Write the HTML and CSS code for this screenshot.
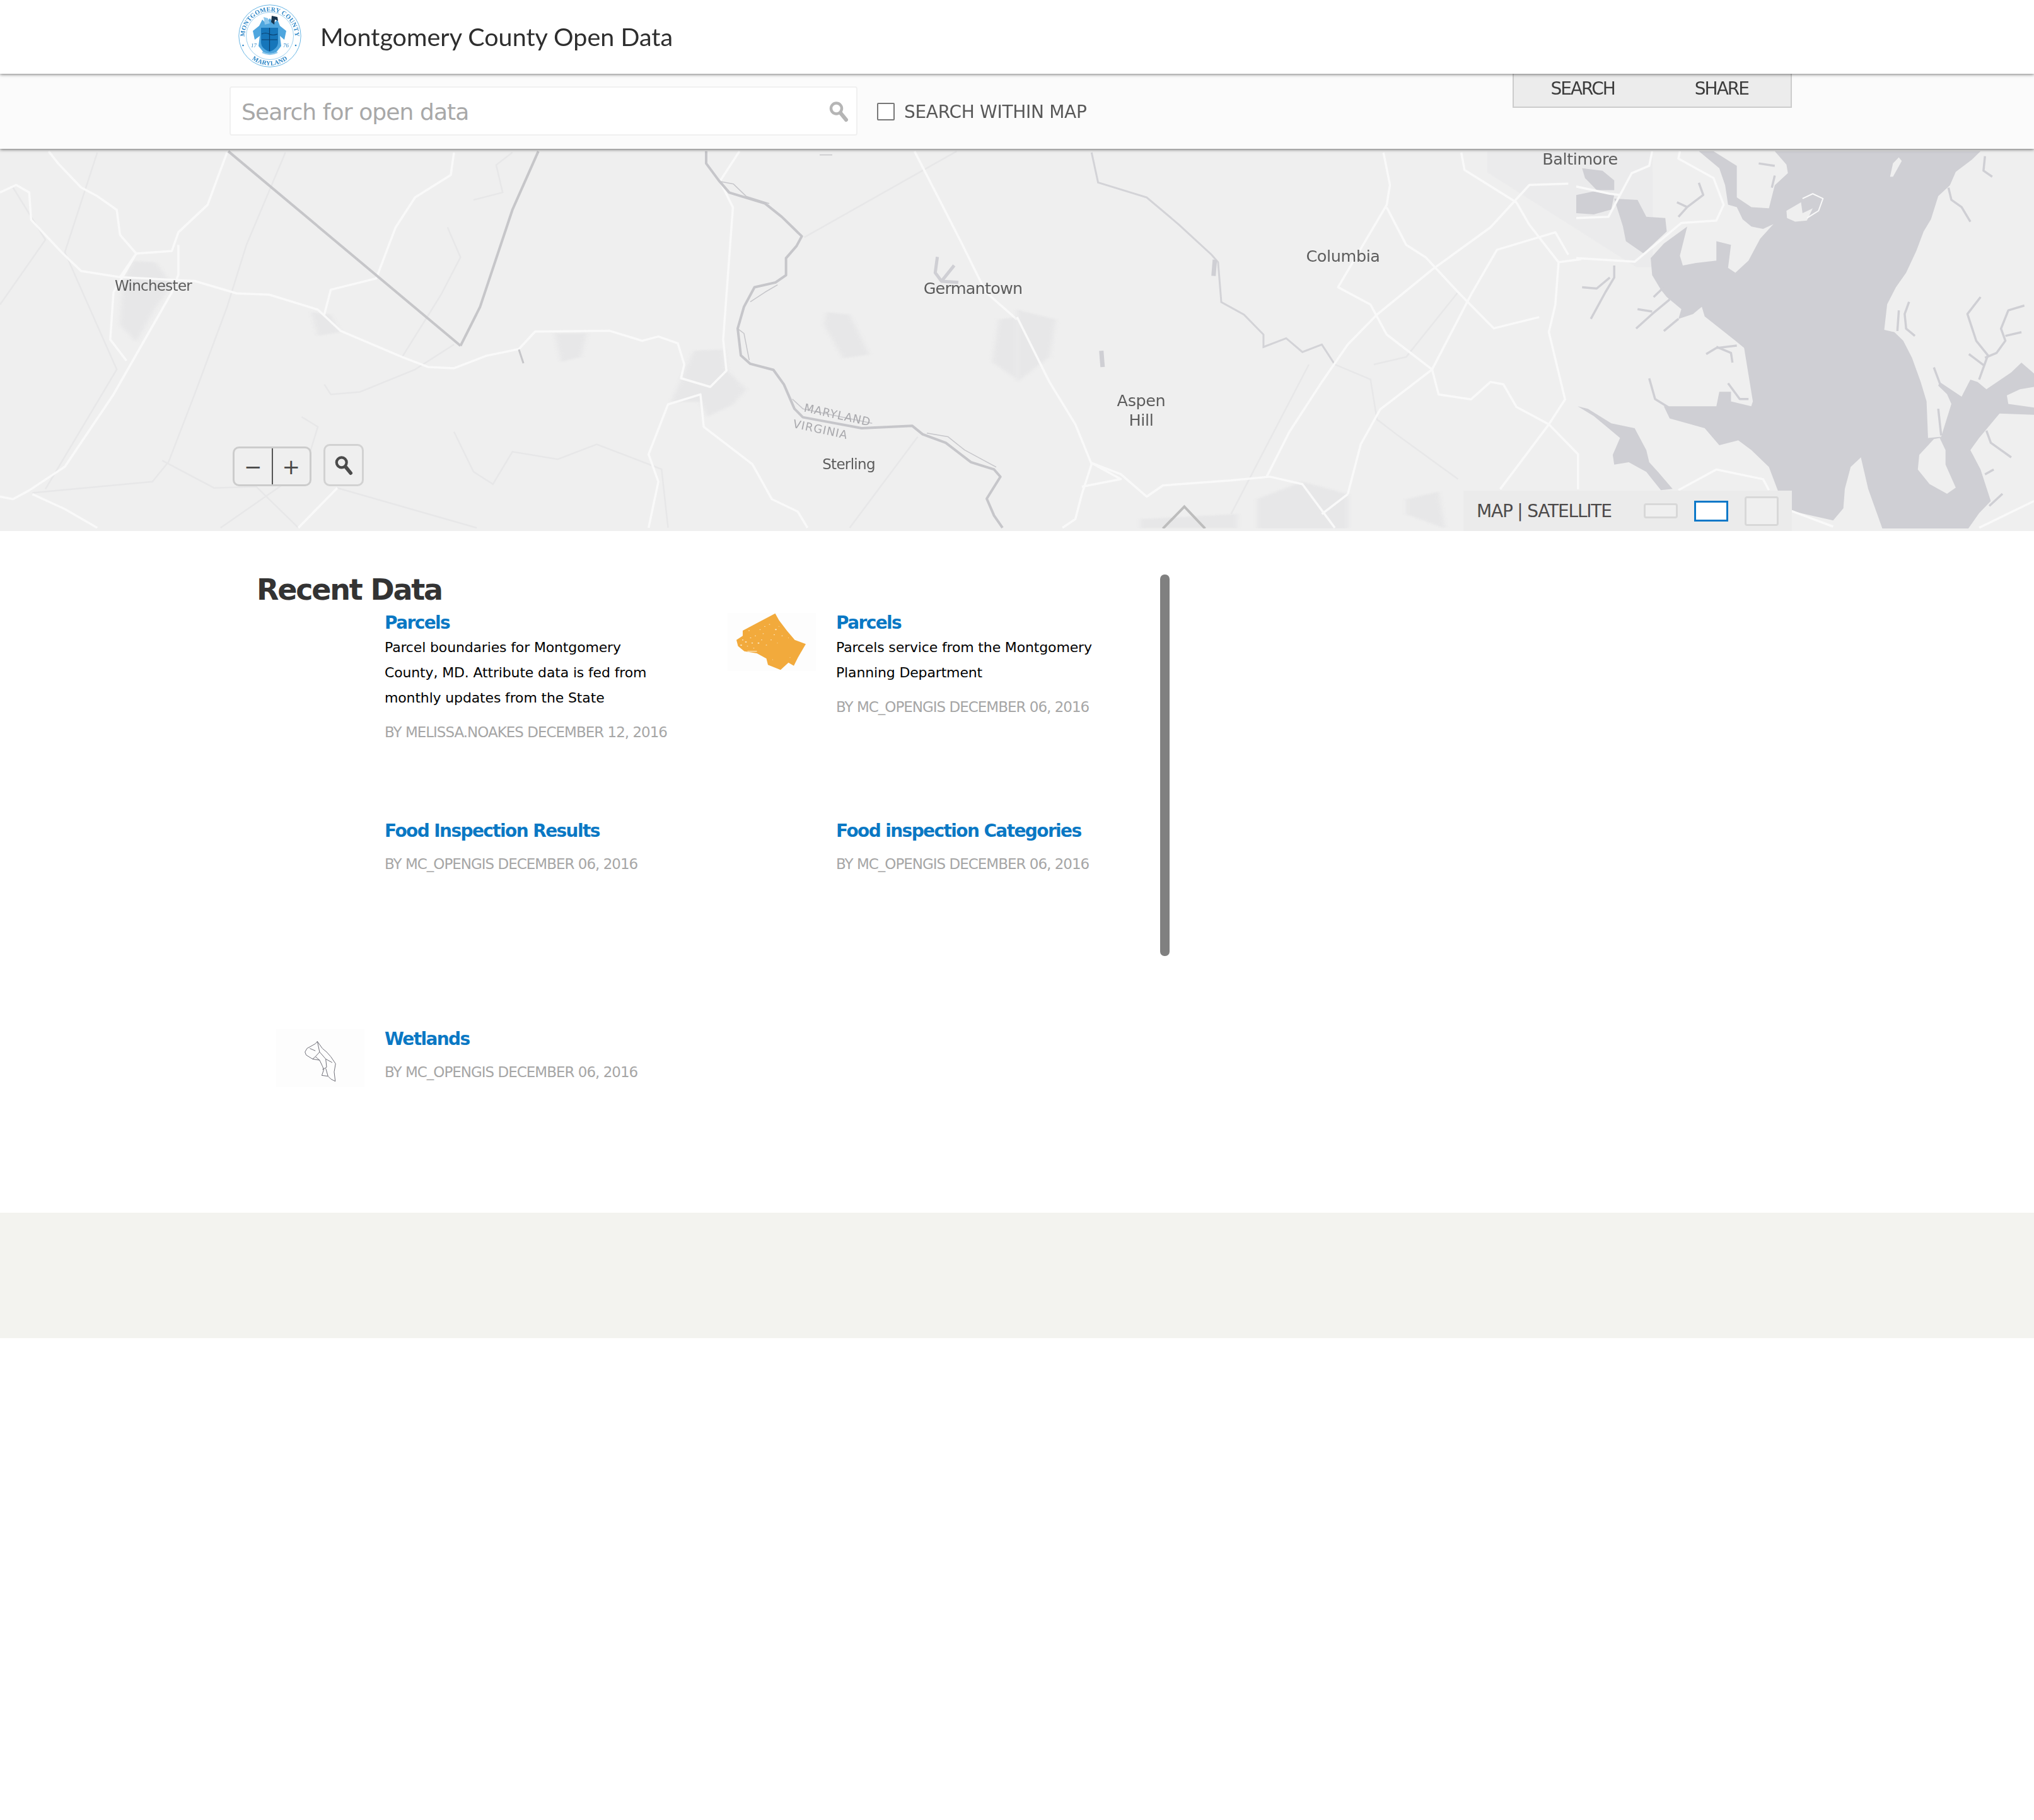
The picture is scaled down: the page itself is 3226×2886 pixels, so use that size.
FILE: index.html
```html
<!DOCTYPE html>
<html lang="en">
<head>
<meta charset="utf-8">
<title>Montgomery County Open Data</title>
<link rel="stylesheet" href="styles.css">
</head>
<body>
<header class="site-header">
  <svg class="seal" viewBox="0 0 100 100" aria-label="Montgomery County seal">
    <defs>
      <path id="sealTop" d="M11 60 A40 40 0 1 1 89 60"/>
      <path id="sealBottom" d="M9 72 A46.5 46.5 0 0 0 91 72"/>
    </defs>
    <circle cx="50" cy="50" r="49.2" class="seal-ring"/>
    <circle cx="50" cy="50" r="37.5" class="seal-ring thin"/>
    <text class="seal-text"><textPath href="#sealTop" startOffset="50%" text-anchor="middle">MONTGOMERY COUNTY</textPath></text>
    <text class="seal-text"><textPath href="#sealBottom" startOffset="50%" text-anchor="middle">MARYLAND</textPath></text>
    <circle class="seal-dot" cx="7.5" cy="65" r="1.3"/>
    <circle class="seal-dot" cx="91" cy="65" r="1.3"/>
    <text class="seal-year" x="20" y="68">17</text>
    <text class="seal-year" x="71" y="68">76</text>
    <path class="seal-mantle" d="M23 42 L33 34 L38 24 L44 30 L50 22 L56 30 L62 24 L66 34 L76 42 L73 56 L66 50 L68 66 L60 76 L50 79 L40 76 L32 66 L34 50 L26 56 Z"/>
    <path class="seal-shield" d="M36 37 H63 V60 Q63 70 49.5 75 Q36 70 36 60 Z"/>
    <path class="seal-lines" d="M37 47 Q43 44 49 47 T62 47 M37 56 H62 M49.5 37 V74"/>
    <path class="seal-crest" d="M53 18 L62 20 L63 26 L58 24 L57 32 L52 28 Z"/>
    <path class="seal-crest light" d="M40 20 L47 22 L50 30 L42 32 Z"/>
    <path class="seal-ribbon" d="M38 76 Q50 82 62 76" />
  </svg>
  <div class="site-title">Montgomery County Open Data</div>
</header>

<section class="search-bar">
  <div class="search-box">
    <span class="search-placeholder">Search for open data</span>
    <svg class="search-icon" viewBox="0 0 32 36"><circle cx="12.5" cy="13" r="8.5"/><path d="M19 20 L28 31"/></svg>
  </div>
  <label class="within-map"><span class="check"></span><span>SEARCH WITHIN MAP</span></label>
  <nav class="tabs"><span>SEARCH</span><span>SHARE</span></nav>
</section>

<section class="map">
  <svg class="map-art" viewBox="0 0 3226 602" preserveAspectRatio="none">
    <g class="map-geo">
    <g transform="translate(0,-6) scale(1.0287,0.3954)">
      <g class="town">
        <polygon points="205,465 240,470 265,560 240,650 210,790 185,720 190,540"/>
        <polygon points="480,670 510,680 525,750 490,765"/>
        <polygon points="855,755 905,755 895,850 865,870"/>
        <polygon points="1070,825 1115,820 1120,900 1150,980 1130,1040 1090,1090 1080,1030 1035,1030 1060,880"/>
        <polygon points="1275,670 1310,680 1340,840 1300,855 1270,720"/>
        <polygon points="1540,700 1568,690 1568,940 1530,870"/>
      </g>
      <g class="faint">
        <path d="M1475,25 L1240,370"/>
        <path d="M1415,1170 L1310,1535"/>
        <path d="M250,1265 L330,1375 L395,1370 L460,1535"/>
        <path d="M50,1395 L235,1350 L260,1270 L300,1000 L350,650 L380,400 L440,30"/>
        <path d="M520,1375 L735,1535"/>
        <path d="M700,1150 L730,1310 L760,1360 L790,1230 L860,1260 L920,1200 L1020,1300 L1030,1535"/>
        <path d="M500,960 L510,1000 L555,990 L640,900 L700,800"/>
        <path d="M465,1090 L490,1130 L470,1300 L340,1535"/>
        <path d="M690,330 L710,450 L680,600 L620,850"/>
        <path d="M70,1380 L180,900 L100,430 L150,30"/>
        <path d="M0,640 L70,380 L20,170"/>
        <path d="M730,220 L775,190 L765,80 L790,30"/>
      </g>
      <g class="road">
        <path d="M75,25 L90,75 L125,170 L150,205 L180,260 L185,360 L210,435 L265,425 L275,350 L320,240 L350,30"/>
        <path d="M0,190 L25,160 L45,190 L48,300 L95,430 L125,505 L185,530 L210,435"/>
        <path d="M185,530 L300,545 L365,595 L415,600 L490,660 L525,745 L620,850 L660,890 L700,895 L750,845 L800,818 L825,748 L940,745 L990,785 L1015,768 L1045,795 L1055,880 L1050,935 L1095,970 L1120,905 L1115,780 L1130,250 L1110,145 L1140,25"/>
        <path d="M500,680 L510,580 L580,535 L610,330 L640,210 L695,120 L700,30"/>
        <path d="M0,1410 L20,1420 L45,1385 L100,1290 L175,1000 L265,590 L275,520 L275,400"/>
        <path d="M210,435 L175,590 L170,780 L195,865"/>
        <path d="M50,1400 L100,1460 L150,1535"/>
        <path d="M460,1535 L520,1375"/>
        <path d="M1000,1535 L1015,1350 L1000,1240 L1030,1040 L1080,1000 L1085,1130 L1160,1280 L1190,1420 L1230,1470 L1245,1535"/>
        <path d="M1410,25 L1480,380 L1520,590 L1568,700"/>
      </g>
      <path class="border" d="M352,25 L710,805"/>
      <path class="border" d="M710,805 L740,650 L790,260 L830,25"/>
      <path class="border thin" d="M800,820 L807,875"/>
    </g>
    <g transform="translate(1100,0) scale(.33333,.3852)">
      <path class="river" d="M60,10 L60,60 L120,130 L170,180 L340,225 L420,280 L515,360 L490,400 L440,450 L440,520 L390,550 L290,570 L240,650 L210,740 L225,850 L270,885 L380,910 L430,970 L480,1070 L520,1105 L800,1150 L1040,1140 L1090,1175 L1200,1210 L1320,1290 L1430,1320 L1460,1350 L1395,1440 L1430,1510 L1470,1560"/>
      <path class="river thin" d="M130,135 L190,145 L250,195 L360,225 M210,740 L240,760 L265,870 M470,1030 L520,1070 L600,1085 L850,1130 M1110,1170 L1210,1185 L1290,1240 L1440,1310 M270,630 L340,590 L400,560"/>
      <path class="river thin" d="M600,25 H660"/>
      <path class="pond" d="M1160,445 L1150,510 L1180,545 L1240,480 M1180,545 L1260,550"/>
    </g>
    <g transform="translate(1613,-6) scale(1.0287,0.3954)">
      <polygon class="city" points="725,25 980,25 980,490 955,490 725,110"/>
      <g class="town">
        <polygon points="370,1420 440,1350 510,1400 510,1538 370,1538"/>
        <polygon points="600,1420 650,1390 660,1538 600,1480"/>
        <polygon points="190,1500 340,1480 340,1538 190,1538"/>
        <polygon points="0,660 60,700 50,850 0,950"/>
      </g>
      <g class="faint">
        <path d="M450,880 L330,1480"/>
        <path d="M680,590 L600,850 L550,880"/>
        <path d="M490,880 L545,940 L555,1100 L590,1170 L680,1340"/>
      </g>
      <g class="creek">
        <path d="M115,30 L125,150 L200,210 L250,320 L300,440 L310,470 L315,630 L350,680 L380,760 L380,810 L415,775 L440,830 L470,800 L490,880"/>
      </g>
      <path class="inlet" d="M305,460 L303,525"/>
      <path class="inlet" d="M130,825 L132,890"/>
      <g class="road">
        <path d="M565,30 L575,160 L570,240 L495,570 L545,640 L570,760 L640,900 L650,1000 L700,1020 L730,950 L750,960 L770,1050 L820,1120 L865,1240 L865,1380"/>
        <path d="M570,250 L600,400 L630,450 L680,590 L735,735 L805,690"/>
        <path d="M100,1370 L160,1340 L115,1275 L160,1320 L200,1410 L225,1365 L330,1345 L390,1330 L440,1360 L490,1535"/>
        <path d="M385,1330 L420,1150 L470,950 L510,800 L555,680 L640,500 L730,330 L790,160 L850,155"/>
        <path d="M510,1400 L530,1200 L560,1060 L640,900 L700,600 L740,420 L830,350 L850,440"/>
        <path d="M470,1480 L510,1400"/>
        <path d="M0,690 L50,950 L90,1120 L115,1280 L100,1400 L90,1500 L70,1535"/>
        <path d="M820,1120 L745,1380"/>
        <path d="M835,470 L870,458"/>
        <path d="M835,470 L790,320 L770,230 L690,100 L685,30"/>
        <path d="M835,470 L830,640 L820,750 L845,1020 L820,1120"/>
      </g>
      <path class="peak" d="M225,1538 L258,1450 L290,1538"/>
    </g>
    <g transform="translate(2500,0) scale(.46301,.3852)">
      <path class="water" d="M680,10 L1385,10 L1355,45 L1300,95 L1280,150 L1240,195 L1215,290 L1190,340 L1165,420 L1130,510 L1095,570 L1065,640 L1055,745 L1090,755 L1120,790 L1150,860 L1180,960 L1200,1040 L1205,1190 L1250,1185 L1285,1050 L1270,1010 L1240,975 L1245,960 L1320,1020 L1350,950 L1375,960 L1405,990 L1490,920 L1525,880 L1568,925 L1568,980 L1520,990 L1475,1015 L1480,1050 L1568,1065 L1568,1095 L1450,1090 L1380,1190 L1350,1240 L1385,1320 L1420,1450 L1380,1500 L1340,1568 L1050,1568 L1000,1400 L975,1270 L940,1310 L920,1400 L915,1480 L880,1530 L735,1490 L690,1405 L660,1310 L600,1240 L555,1200 L490,1220 L440,1150 L380,1130 L320,1110 L300,1060 L480,1060 L490,1000 L530,1000 L530,1040 L600,1060 L605,1080 L570,1165 L605,1040 L575,820 L545,790 L440,690 L430,650 L400,680 L350,700 L360,660 L310,610 L290,580 L260,520 L255,450 L300,390 L380,320 L355,440 L365,480 L410,470 L480,460 L480,380 L530,395 L520,490 L545,510 L590,460 L630,370 L675,310 L640,330 L600,320 L570,290 L550,240 L520,230 L510,150 L490,80 L420,10 L470,10 L550,70 L550,200 L600,240 L660,245 L680,150 L725,100 L720,65 Z"/>
      <polygon class="water" points="130,205 210,210 240,280 305,285 310,340 230,430 170,380 160,320"/>
      <polygon class="water" points="0,190 60,175 130,190 120,250 60,270 0,265"/>
      <polygon class="water" points="20,80 90,90 130,130 130,170 70,170 30,120"/>
      <polygon class="water" points="5,1060 40,1070 120,1130 200,1150 240,1240 250,1290 280,1330 330,1400 290,1405 240,1330 180,1290 130,1300 125,1260 150,1190 110,1150 60,1100"/>
      <g class="land">
        <polygon points="720,255 770,220 775,265 810,245 790,295 750,300 722,285"/>
        <polygon points="1105,35 1115,50 1085,115 1075,115 1085,60"/>
        <polygon points="1225,1195 1245,1190 1265,1240 1265,1300 1300,1395 1270,1420 1210,1380 1170,1320 1175,1260"/>
      </g>
      <path class="road fine" d="M775,205 L810,185 L845,205 L830,255 L790,285"/>
      <g class="inlet mid">
        <path d="M130,480 L130,530 L100,590 L50,700"/>
        <path d="M20,570 L70,575 L115,530"/>
        <path d="M320,620 L260,680 L205,740"/>
        <path d="M300,570 L265,610 M210,660 L260,670"/>
        <path d="M350,700 L300,750"/>
        <path d="M550,810 L480,820 L445,845 M480,815 L530,840 L535,880"/>
        <path d="M250,945 L270,1030 L330,1075"/>
        <path d="M520,965 L560,1030 L590,1030"/>
        <path d="M1140,630 L1125,680 L1130,740 L1160,770"/>
        <path d="M1105,665 L1100,750"/>
        <path d="M1385,610 L1340,680 L1370,790 L1410,850 L1380,950"/>
        <path d="M1535,645 L1480,665 L1455,740 L1470,790 L1440,840 L1400,860"/>
        <path d="M1525,755 L1470,770 M1345,845 L1395,890"/>
        <path d="M1225,900 L1250,980 L1290,1020"/>
        <path d="M1405,1160 L1420,1210 L1490,1270"/>
        <path d="M1400,1340 L1430,1320 M1460,1420 L1415,1470"/>
        <path d="M1240,1070 L1250,1180"/>
        <path d="M1275,160 L1285,210 L1320,240 L1350,300"/>
        <path d="M1400,30 L1395,90 L1425,115"/>
        <path d="M420,140 L435,190 L380,240 L350,280 M345,220 L380,240"/>
        <path d="M625,60 L680,70 M680,110 L670,160"/>
      </g>
      <g class="road">
        <path d="M0,285 L110,280 L150,190 L115,185 L0,155"/>
        <path d="M0,450 L200,465 L360,305 L480,295 L505,230 L470,120 L350,40 L355,10"/>
        <path d="M150,190 L190,100 L250,70 L260,10"/>
        <path d="M350,1405 L480,1320 L640,1360 L660,1405"/>
        <path d="M735,1490 L880,1555"/>
        <path d="M1380,1560 L1568,1450"/>
      </g>
    </g>
    </g>
    <g class="place">
      <text x="243" y="225">Winchester</text>
      <text class="big tight" x="1543" y="230">Germantown</text>
      <text class="big" x="2130" y="179">Columbia</text>
      <text class="big" x="1810" y="408">Aspen</text>
      <text class="big" x="1810" y="439">Hill</text>
      <text class="big" x="2506" y="25">Baltimore</text>
      <text x="1346" y="508">Sterling</text>
    </g>
    <g class="state">
      <text transform="translate(1327,428) rotate(12.5)">MARYLAND</text>
      <text transform="translate(1300,451) rotate(12)">VIRGINIA</text>
    </g>
  </svg>
  <div class="zoom-group"><button class="zoom-btn">−</button><button class="zoom-btn">+</button></div>
  <button class="find-btn"><svg viewBox="0 0 32 36"><circle cx="12.5" cy="13" r="8.5"/><path d="M19 20 L28 31"/></svg></button>
  <div class="basemap">
    <span class="basemap-label">MAP | SATELLITE</span>
    <span class="thumb t1"></span><span class="thumb t2"></span><span class="thumb t3"></span>
  </div>
</section>

<main class="content">
  <h1>Recent Data</h1>
  <div class="list">
    <article class="item">
      <div class="item-thumb blank"></div>
      <div class="item-body">
        <a class="item-title">Parcels</a>
        <p class="item-desc">Parcel boundaries for Montgomery County, MD. Attribute data is fed from monthly updates from the State</p>
        <p class="item-meta">BY MELISSA.NOAKES DECEMBER 12, 2016</p>
      </div>
    </article>
    <article class="item">
      <div class="item-thumb">
        <svg viewBox="52 95 280 280" preserveAspectRatio="none">
          <polygon class="parcel" points="203,97 150,140 100,180 100,205 80,225 85,255 105,280 145,290 175,315 180,345 220,370 245,335 262,350 275,310 300,245 265,225 240,180 215,130"/>
          <g class="speck">
            <circle cx="110" cy="235" r="3"/><circle cx="125" cy="215" r="2"/><circle cx="95" cy="250" r="3"/><circle cx="150" cy="240" r="3"/><circle cx="165" cy="195" r="2"/><circle cx="205" cy="175" r="3"/><circle cx="135" cy="265" r="2"/><circle cx="190" cy="225" r="2"/><circle cx="170" cy="160" r="2"/><circle cx="225" cy="205" r="2"/><circle cx="120" cy="180" r="2"/><circle cx="100" cy="225" r="2.5"/><circle cx="115" cy="255" r="2"/><circle cx="140" cy="205" r="2"/><circle cx="155" cy="175" r="2"/><circle cx="185" cy="150" r="2"/><circle cx="200" cy="200" r="2"/><circle cx="160" cy="225" r="2"/><circle cx="175" cy="250" r="2"/><circle cx="130" cy="240" r="2.5"/><circle cx="215" cy="160" r="1.5"/><circle cx="245" cy="215" r="1.5"/><circle cx="210" cy="240" r="1.5"/><circle cx="195" cy="320" r="1.5"/><circle cx="250" cy="310" r="1.5"/><rect x="115" y="278" width="30" height="4"/>
          </g>
        </svg>
      </div>
      <div class="item-body">
        <a class="item-title">Parcels</a>
        <p class="item-desc">Parcels service from the Montgomery Planning Department</p>
        <p class="item-meta">BY MC_OPENGIS DECEMBER 06, 2016</p>
      </div>
    </article>
    <article class="item">
      <div class="item-thumb blank"></div>
      <div class="item-body">
        <a class="item-title">Food Inspection Results</a>
        <p class="item-meta">BY MC_OPENGIS DECEMBER 06, 2016</p>
      </div>
    </article>
    <article class="item">
      <div class="item-thumb blank"></div>
      <div class="item-body">
        <a class="item-title">Food inspection Categories</a>
        <p class="item-meta">BY MC_OPENGIS DECEMBER 06, 2016</p>
      </div>
    </article>
    <article class="item">
      <div class="item-thumb">
        <svg viewBox="85 68 315 247" preserveAspectRatio="none">
          <path class="wet" d="M232,120 L225,130 L195,150 L188,165 L192,178 L215,195 L225,185 L240,200 L250,225 L255,240 L248,265 L270,268 L280,280 L296,290 L292,250 L297,215 L280,185 L265,165 L250,150 Z M232,120 L240,165 L225,185 M240,165 L262,195 L265,230 L250,240 M262,195 L285,210 M270,268 L262,235 M205,150 L225,160 M215,195 L240,200"/>
        </svg>
      </div>
      <div class="item-body">
        <a class="item-title">Wetlands</a>
        <p class="item-meta">BY MC_OPENGIS DECEMBER 06, 2016</p>
      </div>
    </article>
  </div>
  <div class="scroll-thumb"></div>
</main>

<footer class="site-footer"></footer>
<div class="page-rest"></div>
</body>
</html>
```

FILE: styles.css
```css
* { box-sizing: border-box; }
html, body { margin: 0; padding: 0; background: #fff; }
body { font-family: "DejaVu Sans", sans-serif; color: #333; width: 3226px; }

.site-header {
  position: relative; z-index: 3; height: 117px; padding: 0 0 3px 378px;
  display: flex; align-items: center; gap: 30px; background: #fff;
  box-shadow: 0 1px 5px rgba(0,0,0,.55);
}
.seal { width: 100px; height: 100px; flex: none; }
.seal-ring { fill: #fff; stroke: #58aee2; stroke-width: .9; }
.seal-ring.thin { fill: none; stroke-width: .6; }
.seal-text { font: 700 10px "Liberation Serif", serif; fill: #2a84c6; letter-spacing: .2px; }
.seal-year { font: italic 9px "Liberation Serif", serif; fill: #2a84c6; }
.seal-dot { fill: #2a84c6; }
.seal-mantle { fill: #4fa6de; }
.seal-shield { fill: #1676ba; }
.seal-lines { stroke: #0b3f6c; stroke-width: 1.2; fill: none; }
.seal-crest { fill: #17354f; }
.seal-crest.light { fill: #8cc7ec; }
.seal-ribbon { fill: none; stroke: #8cc7ec; stroke-width: 2.5; }
.site-title { font: 400 39.5px "Lato", sans-serif; color: #2e2e2e; }

.search-bar {
  position: relative; z-index: 2; height: 119px; padding-left: 364px;
  display: flex; align-items: flex-start; background: #fbfbfb;
  box-shadow: 0 1px 5px rgba(0,0,0,.6);
}
.search-box {
  margin-top: 20px; width: 996px; height: 78px; padding: 2px 12px 0 17px;
  display: flex; align-items: center; justify-content: space-between;
  background: #fff; border: 2px solid #f0f0f0; border-radius: 4px;
}
.search-placeholder { font-size: 36px; color: #a8a8a8; letter-spacing: -.9px; }
.search-icon { width: 32px; height: 36px; }
.search-icon circle, .search-icon path { fill: none; stroke: #b5b5b5; stroke-width: 4.5; }
.search-icon path { stroke-width: 6; stroke-linecap: round; }
.within-map {
  margin: 46px 0 0 31px; display: flex; align-items: center; gap: 15px;
  font-size: 28px; line-height: 30px; color: #585858; letter-spacing: -.3px;
}
.check { width: 28px; height: 28px; margin-top: -3px; background: #fff; border: 2px solid #777; border-radius: 2px; }
.tabs {
  margin-left: 675px; width: 443px; height: 54px; padding: 8px 0 0 59px;
  display: flex; gap: 127px; background: #ececec; border: 2px solid #ccc; border-top: 0;
  font-size: 28px; line-height: 32px; color: #3c3c3c; letter-spacing: -2px;
}

.map { position: relative; height: 606px; background: #efefef; overflow: hidden; }
.map-art { display: block; width: 3226px; height: 602px; }
.map-geo { filter: blur(.7px); }
.town polygon { fill: #e7e7e8; filter: blur(3px); }
.city { fill: #ebebec; }
.faint path { fill: none; stroke: #e7e7e8; stroke-width: 2.5; vector-effect: non-scaling-stroke; }
.road path, .road.fine { fill: none; stroke: #f9f9f9; stroke-width: 3.5; stroke-linejoin: round; vector-effect: non-scaling-stroke; }
.road.fine { stroke-width: 2; }
.border { fill: none; stroke: #c6c6c9; stroke-width: 4; vector-effect: non-scaling-stroke; }
.border.thin { stroke-width: 3; }
.river { fill: none; stroke: #c6c6ca; stroke-width: 4; stroke-linejoin: round; vector-effect: non-scaling-stroke; }
.river.thin { stroke-width: 1.5; }
.pond { fill: none; stroke: #cfcfd4; stroke-width: 5; stroke-linejoin: round; vector-effect: non-scaling-stroke; }
.water { fill: #cfcfd4; }
.inlet, .inlet path { fill: none; stroke: #cfcfd4; stroke-width: 7; vector-effect: non-scaling-stroke; }
.inlet.mid path { stroke-width: 3.5; stroke-linejoin: round; }
.creek path { fill: none; stroke: #d3d3d7; stroke-width: 3; vector-effect: non-scaling-stroke; }
.land polygon { fill: #efefef; }
.peak { fill: none; stroke: #bdbdbd; stroke-width: 4; vector-effect: non-scaling-stroke; }
.place text { font-family: "DejaVu Sans", sans-serif; font-size: 23px; fill: #5c5c5c; text-anchor: middle; letter-spacing: -.7px; }
.place text.big { font-size: 25.5px; letter-spacing: -.4px; }
.place text.big.tight { letter-spacing: -.8px; }
.state text { font-family: "DejaVu Sans", sans-serif; font-size: 18px; fill: #a9a9ad; text-anchor: middle; letter-spacing: 1px; }

.zoom-group {
  position: absolute; left: 369px; top: 472px; width: 125px; height: 63px;
  display: flex; background: #efefef; border: 3px solid #ccc; border-radius: 10px;
}
.zoom-btn {
  flex: 1; padding: 0; border: 0; background: none; font: 34px "DejaVu Sans", sans-serif; color: #4a4a4a;
}
.zoom-btn:first-child { border-right: 2px solid #555; }
.find-btn {
  position: absolute; left: 513px; top: 468px; width: 64px; height: 67px; padding: 0;
  display: flex; align-items: center; justify-content: center;
  background: #efefef; border: 3px solid #d2d2d2; border-radius: 10px;
}
.find-btn svg { width: 30px; height: 34px; }
.find-btn circle, .find-btn path { fill: none; stroke: #4b4b4b; stroke-width: 4.5; }
.find-btn path { stroke-width: 6; stroke-linecap: round; }
.basemap {
  position: absolute; left: 2321px; top: 542px; width: 521px; height: 64px;
  padding-left: 21px; background: #ebebeb;
  display: flex; align-items: center;
}
.basemap-label { width: 265px; font-size: 28px; color: #4d4a4a; letter-spacing: -1.2px; white-space: nowrap; }
.thumb { display: block; width: 54px; margin-right: 26px; background: #efefef; border: 3px solid #d8d8d8; border-radius: 4px; }
.t1 { height: 24px; }
.t2 { height: 33px; background: #fff; border-color: #0a78c8; border-radius: 0; }
.t3 { height: 47px; margin-right: 0; }

.content { position: relative; height: 1081px; padding: 63px 0 0 407px; }
h1 { margin: 0 0 6px; font-size: 46px; line-height: 60px; font-weight: 700; color: #333; letter-spacing: -2.2px; }
.list { margin-left: 31px; width: 1432px; display: grid; grid-template-columns: 716px 716px; grid-auto-rows: 240px; row-gap: 90px; }
.item { display: flex; gap: 32px; }
.item-thumb { width: 140px; height: 92px; margin-top: 1px; flex: none; background: #fdfdfd; }
.item-thumb.blank { background: #fff; }
.item-thumb svg { display: block; width: 100%; height: 100%; }
.parcel { fill: #f2aa3c; }
.speck { fill: #fbe6c0; }
.wet { fill: none; stroke: #6f6f78; stroke-width: 1; vector-effect: non-scaling-stroke; }
.item-body { width: 470px; }
.item-title { display: block; margin-top: -1px; font-size: 28px; line-height: 36px; font-weight: 700; color: #0a78c4; letter-spacing: -1.6px; }
.item-desc { width: 440px; margin: 1px 0 0; font-size: 22px; line-height: 40px; color: #000; letter-spacing: -.15px; }
.item-meta { margin: 16px 0 0; font-size: 23px; line-height: 36px; color: #a6a6a6; letter-spacing: -1px; }
.scroll-thumb { position: absolute; left: 1840px; top: 69px; width: 15px; height: 605px; background: #808080; border-radius: 7px; }

.site-footer { height: 199px; background: #f3f3ef; }
.page-rest { height: 764px; background: #fff; }
```
